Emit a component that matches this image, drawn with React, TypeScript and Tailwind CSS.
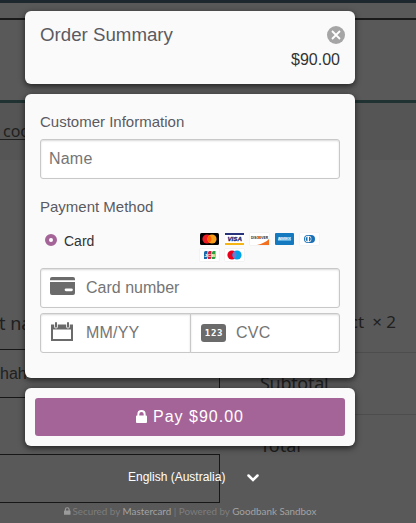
import React from "react";

const sans = "font-['Liberation_Sans',Arial,sans-serif]";
const panel = "rounded-md bg-[#fafafa] shadow-[0_2px_6px_rgba(0,0,0,0.65)]";
const field =
  "h-10 border border-[#c8c8c8] bg-white shadow-[inset_0_1px_2px_rgba(0,0,0,0.15)] flex items-center text-base text-[#757575]";

function Lock({ className }: { className: string }) {
  return (
    <svg viewBox="0 0 12 14" className={className} fill="currentColor">
      <path
        fillRule="evenodd"
        d="M1.5 6V4.5a4.5 4.5 0 0 1 9 0V6h.5a1 1 0 0 1 1 1v6a1 1 0 0 1-1 1H1a1 1 0 0 1-1-1V7a1 1 0 0 1 1-1zM3.6 6h4.8V4.5a2.4 2.4 0 0 0-4.8 0z"
      />
    </svg>
  );
}

function StorePage() {
  return (
    <div className="h-[523px] w-[416px] overflow-hidden bg-[#595959] font-['Noto_Sans',sans-serif] text-lg text-[#202020]">
      <div className="h-[3px] bg-[#1d282e]" />
      <div className="h-[17px] border-b-2 border-[#1a1a1a]" />
      <div className="mt-20 h-[60px] border-t-[3px] border-[#203232] bg-[#555555] pt-[19px]">
        <div className="h-[18px] w-9 border-b border-[#1f1f1f] pl-[3px] text-base leading-[18px]">coo</div>
      </div>
      <div className="flex h-[363px]">
        <div className="w-[220px] shrink-0 pt-[152px]">
          <div className="-ml-px h-[37px] text-lg leading-[23px]">t na</div>
          <div className="h-[49px] border-y border-r border-[#171717] text-base leading-[47px] font-['Liberation_Sans',sans-serif]">hah</div>
          <div className="mt-14 h-[49px] border-y border-r border-[#171717]" />
        </div>
        <div className="ml-10 w-[156px] pt-[150px]">
          <div className="flex h-[43px] justify-end border-b border-[#4d4d4d] pr-5 text-[17px] leading-6">
            <span>ct</span>
            <span className="ml-2">× 2</span>
          </div>
          <div className="h-[62px] border-b border-[#4d4d4d] pt-[18px] text-lg leading-6 tracking-[-0.3px]">Subtotal</div>
          <div className="pt-[19px] text-lg leading-[23px]">Total</div>
        </div>
      </div>
    </div>
  );
}

function CardBrands() {
  return (
    <div className="flex w-[125px] flex-wrap gap-x-[6px] gap-y-1">
      <svg className="h-3 w-[19px]" viewBox="0 0 19 12">
        <rect width="19" height="12" rx="1.5" fill="#000" />
        <circle cx="7" cy="6" r="4.6" fill="#eb1c26" />
        <circle cx="12" cy="6" r="4.6" fill="#f79e1b" />
        <path d="M9.5 2.2a4.6 4.6 0 0 1 0 7.6a4.6 4.6 0 0 1 0-7.6" fill="#ff5f00" />
      </svg>
      <svg className="h-3 w-[19px]" viewBox="0 0 19 12">
        <rect width="19" height="12" fill="#fff" />
        <path d="M0 0h19v2H0z" fill="#26337a" />
        <path d="M0 10h19v2H0z" fill="#f5b515" />
        <text x="2.4" y="8.3" textLength="14.5" lengthAdjust="spacingAndGlyphs" fontSize="6.2" fontWeight="bold" fontStyle="italic" fontFamily="Liberation Sans" fill="#1a2870" stroke="#1a2870" strokeWidth="0.3">VISA</text>
      </svg>
      <svg className="h-3 w-[19px] shadow-[0_0_1px_#ccc]" viewBox="0 0 19 12">
        <rect width="19" height="12" fill="#fff" />
        <path d="M19 6v6H7q8-2 12-6" fill="#f37021" />
        <text x="1" y="5.9" textLength="17" lengthAdjust="spacingAndGlyphs" fontSize="3.8" fontWeight="bold" fontFamily="Liberation Sans" fill="#222">DISCOVER</text>
        <circle cx="9.2" cy="4.5" r="1.4" fill="#f37021" />
      </svg>
      <svg className="h-3 w-[19px]" viewBox="0 0 19 12">
        <rect width="19" height="12" rx="1" fill="#1479bf" />
        <path d="M3 4h13v4H3z" fill="#5eafe0" />
        <text x="3" y="7.4" textLength="13" lengthAdjust="spacingAndGlyphs" fontSize="4" fontFamily="Liberation Sans" fill="#fff">AMEX</text>
      </svg>
      <svg className="h-3 w-[19px] shadow-[0_0_1px_#ddd]" viewBox="0 0 19 12">
        <rect width="19" height="12" fill="#fff" />
        <rect x="4" y="2" width="11" height="8" rx="4" fill="#1a70b5" />
        <circle cx="8.2" cy="6" r="3.2" fill="#fff" />
        <path d="M7.5 3.5v5a2.6 2.6 0 0 1 0-5m1.5 0v5a2.6 2.6 0 0 0 0-5" fill="#1a70b5" />
      </svg>
      <svg className="h-3 w-[19px] shadow-[0_0_1px_#ccc]" viewBox="0 0 19 12">
        <rect width="19" height="12" fill="#fff" />
        <path d="M5.5 2h2v6.5q0 1.5-1.5 1.5H4V3.5Q4 2 5.5 2" fill="#1668a9" />
        <path d="M9.5 2h2v6.5q0 1.5-1.5 1.5H8V3.5Q8 2 9.5 2" fill="#d31f45" />
        <path d="M13.5 2h2v6.5q0 1.5-1.5 1.5h-2V3.5q0-1.5 1.5-1.5" fill="#2b9d3e" />
        <text x="4.2" y="7.5" textLength="11" lengthAdjust="spacingAndGlyphs" fontSize="4.2" fontWeight="bold" fontFamily="Liberation Sans" fill="#fff">JCB</text>
      </svg>
      <svg className="h-3 w-[19px] shadow-[0_0_1px_#ccc]" viewBox="0 0 19 12">
        <rect width="19" height="12" fill="#fff" />
        <circle cx="7" cy="6" r="4.6" fill="#eb001b" />
        <circle cx="12" cy="6" r="4.6" fill="#00a2e5" />
        <path d="M9.5 2.2a4.6 4.6 0 0 1 0 7.6a4.6 4.6 0 0 1 0-7.6" fill="#7375cf" />
      </svg>
    </div>
  );
}

function PaymentForm() {
  return (
    <section className={`${panel} mt-2.5 h-[284px] px-[15px] pt-[18px]`}>
      <h2 className="text-[15px] leading-5 text-[#5a5a62]">Customer Information</h2>
      <div className={`${field} mt-[7px] rounded-[3px] px-2 tracking-[0.2px]`}>Name</div>
      <h2 className="mt-[18px] text-[15px] leading-5 text-[#5a5a62]">Payment Method</h2>
      <div className="mt-4 flex h-[35px] items-start">
        <span className="mt-[1px] ml-[5px] h-3 w-3 rounded-full border-4 border-[#a46497] bg-white" />
        <span className="ml-[7px] w-[136px] text-sm leading-4 text-[#333]">Card</span>
        <CardBrands />
      </div>
      <div className={`${field} rounded-[3px] px-[9px]`}>
        <svg className="-mt-1 h-[18px] w-[25px]" viewBox="0 0 25 18" fill="#6b6b6b">
          <path d="M2 0h21a2 2 0 0 1 2 2v1.3H0V2a2 2 0 0 1 2-2" />
          <path fillRule="evenodd" d="M0 5h25v11a2 2 0 0 1-2 2H2a2 2 0 0 1-2-2zm16 6.5a1.3 1.3 0 0 0 0 2.7h5.5a1.3 1.3 0 0 0 0-2.7z" />
        </svg>
        <span className="ml-[11px]">Card number</span>
      </div>
      <div className="mt-[5px] flex">
        <div className={`${field} w-[151px] rounded-l-[3px] px-2.5`}>
          <svg className="-mt-1 h-[19px] w-[22px]" viewBox="0 0 22 19">
            <path d="M1 4v14h20V4" fill="none" stroke="#6b6b6b" strokeWidth="2" />
            <path d="M0 2.5h22V7.5H0z" fill="#6b6b6b" />
            <path d="M5 0v4.8M17 0v4.8" stroke="#fff" strokeWidth="3.6" strokeLinecap="round" />
            <path d="M5 1v3.8M17 1v3.8" stroke="#6b6b6b" strokeWidth="2" strokeLinecap="round" />
          </svg>
          <span className="ml-[13px] tracking-[0.2px]">MM/YY</span>
        </div>
        <div className={`${field} -ml-px w-[150px] rounded-r-[3px] pl-2.5`}>
          <span className="flex h-[18px] w-[25px] items-center justify-center rounded-[3px] bg-[#6b6b6b] pt-px pl-px font-['DejaVu_Sans_Mono',monospace] text-[9px] font-bold leading-none tracking-[0.8px] text-white">123</span>
          <span className="ml-2.5 tracking-[0.2px]">CVC</span>
        </div>
      </div>
    </section>
  );
}

export default function App() {
  return (
    <main className={`relative h-[523px] w-[416px] overflow-hidden ${sans}`}>
      <StorePage />
      <div className="absolute inset-y-0 left-[25px] w-[330px] pt-[11px]">
        <section className={`${panel} h-[73px] px-[15px] pt-[13px]`}>
          <div className="flex items-start justify-between">
            <h1 className="text-[18.7px] leading-[22px] text-[#5a5a62]">Order Summary</h1>
            <svg className="mt-0.5 -mr-[5px] h-[18px] w-[18px]" viewBox="0 0 18 18">
              <circle cx="9" cy="9" r="9" fill="#a5a5a5" />
              <path d="m5 5 8 8m0-8-8 8" stroke="#fff" strokeWidth="1.8" />
            </svg>
          </div>
          <div className="mt-[3px] text-right text-base leading-[22px] text-[#333]">$90.00</div>
        </section>
        <PaymentForm />
        <section className={`${panel} mt-2.5 h-[58px] p-2.5`}>
          <button className="flex h-[38px] w-full items-center justify-center rounded-[3px] bg-[#a46497] text-base tracking-[1px] text-white">
            <Lock className="mr-1.5 -mt-0.5 h-[13px] w-[11px]" />
            Pay $90.00
          </button>
        </section>
        <div className="mt-[22px] flex h-[18px] items-center pl-[103px] text-xs text-white">
          <span>English (Australia)</span>
          <svg className="ml-[22px] mt-px h-2 w-3" viewBox="0 0 12 8" fill="none" stroke="#fff" strokeWidth="2.5">
            <path d="m1.5 1.5 4.5 4.5 4.5-4.5" strokeLinecap="round" />
          </svg>
        </div>
        <div className="mt-[17px] flex items-center pl-[39px] font-['Lato',sans-serif] text-[9.85px] leading-4 whitespace-nowrap text-[#7d7d7d]">
          <Lock className="-mt-px mr-0.5 h-2 w-[6.5px] text-[#9b9b9b]" />
          <span>
            Secured by <span className="text-[#a3a3a3]">Mastercard</span> | Powered by{" "}
            <span className="text-[#a3a3a3]">Goodbank Sandbox</span>
          </span>
        </div>
      </div>
    </main>
  );
}
